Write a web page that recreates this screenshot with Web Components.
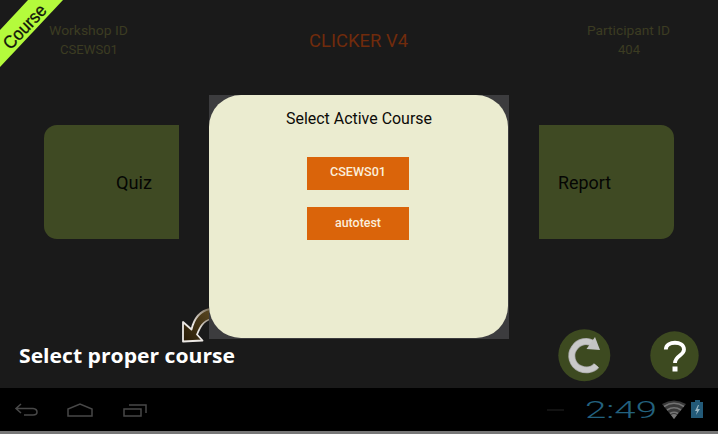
<!DOCTYPE html>
<html lang="en">
<head>
<meta charset="utf-8">
<title>Clicker V4</title>
<style>
html,body{margin:0;height:100%;background:#1a1a1a;overflow:hidden}
body{font-family:Roboto,"Liberation Sans",sans-serif}
</style>
</head>
<body>
<clicker-app></clicker-app>
<script>
const define = (name, html, setup) => customElements.define(name, class extends HTMLElement {
  connectedCallback() {
    if (this.shadowRoot) return;
    const t = document.createElement('template');
    t.innerHTML = html;
    this.attachShadow({mode:'open'}).append(t.content.cloneNode(true));
    if (setup) setup.call(this, this.shadowRoot);
  }
});

/* One line of text set to a given advance width */
define('fit-text', `<style>:host{display:block;line-height:0}svg{display:block;overflow:visible}text{fill:currentColor}</style>
<svg><text x="0" lengthAdjust="spacingAndGlyphs"></text></svg>`, function(root) {
  const a = n => this.getAttribute(n), svg = root.querySelector('svg'), t = root.querySelector('text');
  const size = +a('size');
  svg.setAttribute('width', a('w'));
  svg.setAttribute('height', size);
  t.setAttribute('y', size);
  t.setAttribute('textLength', a('w'));
  t.style.fontSize = size + 'px';
  if (a('weight')) t.style.fontWeight = a('weight');
  t.textContent = a('text');
});

define('course-ribbon', `<style>:host{position:absolute;left:0;top:0;font-family:"Liberation Sans",sans-serif}svg{display:block}</style>
<svg width="70" height="70"><path d="M28 0H63L0 67V30Z" fill="#b4fb3c"/>
<text transform="translate(10.500 50.500) rotate(-46.5)" font-size="18" textLength="54" lengthAdjust="spacingAndGlyphs" fill="#10140a" stroke="#10140a" stroke-width=".3">Course</text></svg>`);

define('id-block', `<style>:host{display:flex;flex-direction:column;align-items:center;gap:6px;color:#3c3c22}</style><slot></slot>`);

define('app-header', `<style>:host{display:grid;grid-template-columns:177px 1fr 179px;height:125px;box-sizing:border-box;padding-top:22px;justify-items:center;align-items:start}
.title{color:#702b0c;padding-top:7px}</style>
<id-block><fit-text text="Workshop ID" w="79" size="13"></fit-text><fit-text text="CSEWS01" w="58" size="13"></fit-text></id-block>
<fit-text class="title" text="CLICKER V4" w="99" size="18"></fit-text>
<id-block><fit-text text="Participant ID" w="83" size="13"></fit-text><fit-text text="404" w="22" size="13"></fit-text></id-block>`);

define('menu-tile', `<style>:host{display:flex;align-items:center;width:135px;height:114px;box-sizing:border-box;background:#3f4a23;color:#050603;border-radius:13px 0 0 13px;padding:0 27px 4px;justify-content:flex-end}
:host([side=right]){border-radius:0 13px 13px 0;justify-content:flex-start;padding:0 19px 4px}</style><slot></slot>`);

define('course-button', `<style>:host{display:flex;width:102px;height:33px;background:#da640a;color:#faeedb;justify-content:center;padding-top:6px;box-sizing:border-box}</style><slot></slot>`);

define('course-dialog', `<style>:host{position:absolute;left:209px;top:95px;width:300px;height:244px;background:#3c3c3e}
.card{height:243px;width:299px;background:#ebecd0;border-radius:32px;display:flex;flex-direction:column;align-items:center;box-sizing:border-box;padding-top:12px;color:#0b0b08}
.list{display:flex;flex-direction:column;gap:17px;padding:33px 2px 0 0}course-button+course-button{padding-top:7px}</style>
<div class="card"><fit-text text="Select Active Course" w="146" size="17"></fit-text>
<div class="list"><course-button><fit-text text="CSEWS01" w="56" size="13" weight="500"></fit-text></course-button>
<course-button><fit-text text="autotest" w="46" size="13" weight="500"></fit-text></course-button></div></div>`);

define('hint-arrow', `<style>:host{position:absolute;left:180px;top:306px}svg{display:block}</style>
<svg width="32" height="38"><defs><linearGradient id="g" x1="0" y1="1" x2="1" y2="0"><stop offset="0" stop-color="#281b06"/><stop offset="1" stop-color="#5a4822"/></linearGradient><linearGradient id="s" x1="0" y1="1" x2="1" y2="0"><stop offset=".45" stop-color="#ece8e4"/><stop offset="1" stop-color="#756853"/></linearGradient></defs>
<path d="M30 3C19 5 14 13 11.500 23.500L3 16V35.500L22.500 34.500L17 28.500C20 21 23 15 31 13Z" fill="url(#g)" stroke="url(#s)" stroke-width="1.8" stroke-linejoin="round"/></svg>`);

define('round-button', `<style>:host{display:block}svg{display:block}</style><svg width="53" height="53"></svg>`, function(root) {
  const svg = root.querySelector('svg');
  svg.innerHTML = this.getAttribute('kind') === 'refresh'
    ? `<circle cx="26.300" cy="26.300" r="26" fill="#3d4a20"/><path d="M38.500 36.500C34.500 41 28 42 22 39.500C14 36 11.500 26 16 19.500C20.500 12 30 10.500 36 15.500" fill="none" stroke="#a5a5a5" stroke-width="7"/><path d="M38.500 36.500C34.500 41 28 42 22 39.500C14 36 11.500 26 16 19.500C20.500 12 30 10.500 36 15.500" fill="none" stroke="#c9c9c9" stroke-width="5.500"/><path d="M37 8L42 21L28.500 20Z" fill="#c4c4c4"/>`
    : `<circle cx="26.500" cy="26.500" r="24.200" fill="#3d4a20"/><path d="M17.800 20.500C18 11.500 36 11.500 36 20.500C36 26.500 27 26.500 27 34" fill="none" stroke="#fff" stroke-width="3.800"/><path d="M24.500 37.500h5v5h-5z" fill="#fff"/>`;
});

define('action-row', `<style>:host{display:flex;align-items:flex-start;height:59px;padding-left:19px;box-sizing:border-box;color:#fff}
.hint{padding-top:15px;flex:1;font-family:"Open Sans",sans-serif}.buttons{display:flex;gap:37px;padding-right:17px}</style>
<fit-text class="hint" text="Select proper course" w="216" size="19" weight="700"></fit-text>
<div class="buttons"><round-button kind="refresh"></round-button><round-button kind="help"></round-button></div>`);

define('nav-keys', `<style>:host{display:block}svg{display:block}</style>
<svg width="150" height="43" fill="none" stroke="#484848" stroke-width="1.500"><path d="M21 16L16 20.500L21 25M16 20.500H33Q37 21 37 24Q37 27 33 27H24"/><path d="M68 28V21L80 16L92 21V28Z"/><path d="M124 21H141V28H124ZM129 17H146V25"/></svg>`);

define('status-tray', `<style>:host{display:flex;align-items:flex-start;padding-right:14px}
.clock{color:#23617e;padding:5px 5px 0 0}svg{display:block}.dash{padding-right:20px}</style>
<svg class="dash" width="20" height="43"><path d="M2 22h17" stroke="#191919" stroke-width="1.500"/></svg>
<fit-text class="clock" text="2:49" w="72" size="24.500" weight="300"></fit-text>
<svg width="42" height="43"><path d="M12 31L0 16Q12 9 24 16Z" fill="#393939"/><path d="M2 18.500Q12 12 22 18.500M5 22Q12 17.500 19 22M8 25.500Q12 23 16 25.500" stroke="#747474" stroke-width="1.700" fill="none"/><path d="M12 31L9 27Q12 25 15 27Z" fill="#777"/>
<path d="M29 14H33V12H38V14H41V30H29Z" fill="#235a78"/><path d="M36 17L33 23H35L34 27L38 21H35.500L37 17Z" fill="#9bb8c5"/></svg>`);

define('system-bar', `<style>:host{display:flex;justify-content:space-between;box-sizing:border-box;height:46px;background:#000;border-bottom:3px solid #777}</style>
<nav-keys></nav-keys><status-tray></status-tray>`);

define('clicker-app', `<style>:host{display:flex;flex-direction:column;position:relative;width:718px;height:434px;background:#1a1a1a;overflow:hidden}
.tiles{display:flex;justify-content:space-between;padding:0 44px;height:204px;align-items:flex-start}</style>
<app-header></app-header>
<div class="tiles"><menu-tile><fit-text text="Quiz" w="36" size="18"></fit-text></menu-tile><menu-tile side="right"><fit-text text="Report" w="53" size="18"></fit-text></menu-tile></div>
<action-row></action-row><system-bar></system-bar>
<hint-arrow></hint-arrow><course-dialog></course-dialog><course-ribbon></course-ribbon>`);
</script>
</body>
</html>
